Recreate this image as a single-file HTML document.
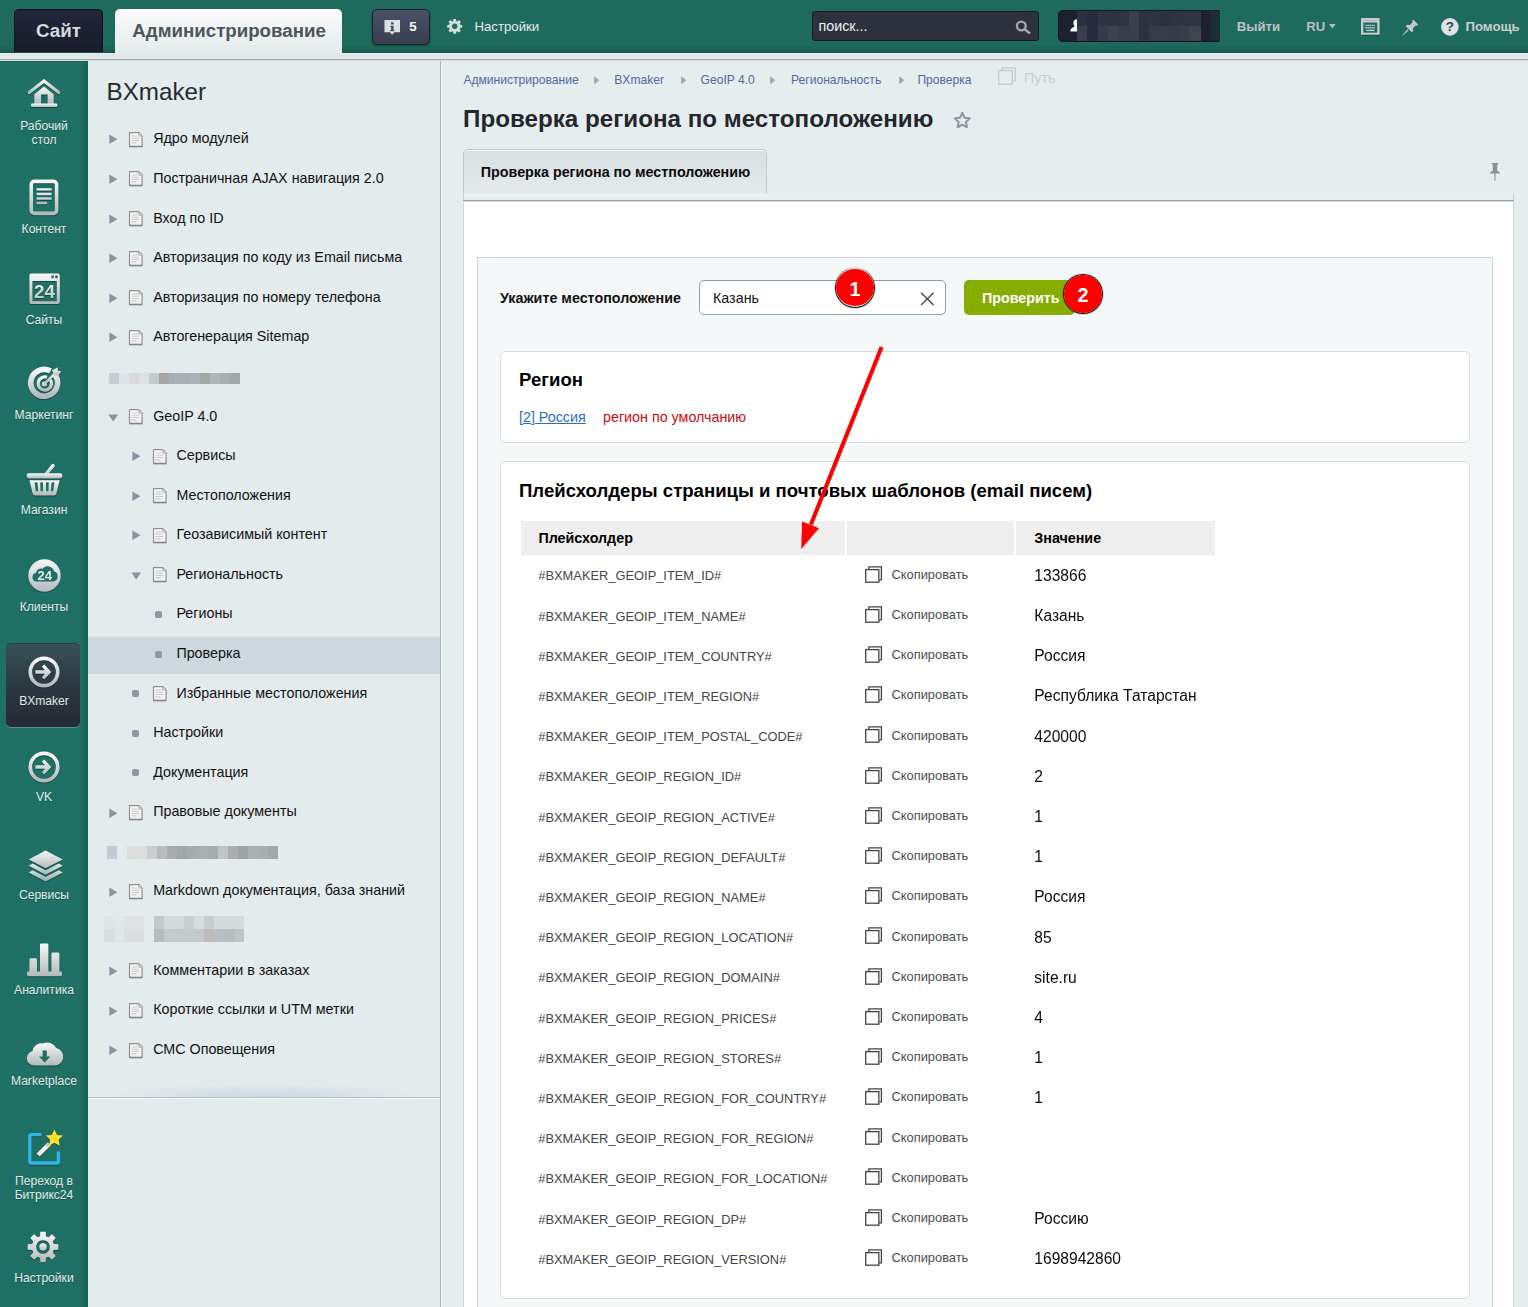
<!DOCTYPE html>
<html lang="ru"><head><meta charset="utf-8"><title>Проверка региона по местоположению</title>
<style>
html,body{margin:0;padding:0;overflow:hidden}
body{width:1528px;height:1307px;overflow:hidden;position:relative;background:#e6edef;font-family:"Liberation Sans",Arial,sans-serif;}
.t{position:absolute;white-space:nowrap;}
i{display:block}
</style></head><body>
<svg width="0" height="0" style="position:absolute"><defs>
<linearGradient id="ig" x1="0" y1="0" x2="0" y2="1" gradientUnits="objectBoundingBox"><stop offset="0" stop-color="#f6f8f8"/><stop offset="1" stop-color="#b3b9b9"/></linearGradient>
<linearGradient id="dg" x1="0" y1="0" x2="0" y2="1"><stop offset="0" stop-color="#ffffff"/><stop offset="1" stop-color="#ececec"/></linearGradient>
</defs></svg>
<div style="position:absolute;left:441px;top:61px;width:1087px;height:1246px;background:#e6edef;"></div>
<div style="position:absolute;left:441px;top:61px;width:1px;height:1246px;background:#f1f5f6;"></div>
<div class="t" style="left:463.4px;top:72px;font-size:12.1px;line-height:16px;color:#4d6aa3;">Администрирование</div>
<div class="t" style="left:614.3px;top:72px;font-size:12.1px;line-height:16px;color:#4d6aa3;">BXmaker</div>
<div class="t" style="left:700.6px;top:72px;font-size:12.1px;line-height:16px;color:#4d6aa3;">GeoIP 4.0</div>
<div class="t" style="left:791px;top:72px;font-size:12.1px;line-height:16px;color:#4d6aa3;">Региональность</div>
<div class="t" style="left:917.4px;top:72px;font-size:12.1px;line-height:16px;color:#4d6aa3;">Проверка</div>
<svg style="position:absolute;left:594.3px;top:76.4px;" width="6" height="9" viewBox="0 0 6 9"><path d="M0.2 0.3L5.2 4.3 0.2 8.4z" fill="#a2a7ad"/></svg>
<svg style="position:absolute;left:681.4px;top:76.4px;" width="6" height="9" viewBox="0 0 6 9"><path d="M0.2 0.3L5.2 4.3 0.2 8.4z" fill="#a2a7ad"/></svg>
<svg style="position:absolute;left:770.4px;top:76.4px;" width="6" height="9" viewBox="0 0 6 9"><path d="M0.2 0.3L5.2 4.3 0.2 8.4z" fill="#a2a7ad"/></svg>
<svg style="position:absolute;left:899.3px;top:76.4px;" width="6" height="9" viewBox="0 0 6 9"><path d="M0.2 0.3L5.2 4.3 0.2 8.4z" fill="#a2a7ad"/></svg>
<svg style="position:absolute;left:998px;top:66.6px;" width="18" height="18" viewBox="0 0 18 18"><g fill="none" stroke="#c3cbd1" stroke-width="1.3"><path d="M4.2 3.2V0.8H17.2V13.8H14.4"/><rect x="0.7" y="3.6" width="13.6" height="13.6"/></g></svg>
<div class="t" style="left:1024px;top:69px;font-size:14.3px;line-height:18px;color:#c7ced6;">Путь</div>
<div class="t" style="left:463px;top:104px;font-size:24.2px;line-height:29px;color:#23262d;font-weight:bold;">Проверка региона по местоположению</div>
<svg style="position:absolute;left:952.6px;top:110.6px;" width="18.6" height="18.6" viewBox="0 0 20 20"><path d="M10 2l2.45 5.2 5.65.7-4.15 3.95 1.05 5.65-5-2.75-5 2.75 1.05-5.65-4.15-3.95 5.65-.7z" fill="none" stroke="#8e98a5" stroke-width="2.2" stroke-linejoin="round"/></svg>
<div style="position:absolute;left:463px;top:149px;width:304px;height:46px;box-sizing:border-box;border:1px solid #c3cbcf;border-bottom:0;border-radius:5px 5px 0 0;background:linear-gradient(#d8dfe1,#e5ebed);box-shadow:inset 0 1px 0 #fbfcfc;"></div>
<div class="t" style="left:480.8px;top:163px;font-size:14.3px;line-height:18px;color:#0c0c0c;font-weight:bold;">Проверка региона по местположению</div>
<svg style="position:absolute;left:1490px;top:163px;" width="10" height="18" viewBox="0 0 10 18"><g fill="#8b9196"><path d="M1.8 0h6.4v1.4h-1v6.4c1.4.5 2.6 1.4 2.8 2.6h-10c.2-1.2 1.4-2.1 2.8-2.6v-6.4h-1z"/><rect x="4.4" y="10" width="1.1" height="7.6"/></g></svg>
<div style="position:absolute;left:463px;top:194px;width:1051px;height:6px;box-sizing:border-box;border-left:1px solid #c6cfd3;border-right:1px solid #c6cfd3;background:linear-gradient(#eef2f3,#e6ecee);"></div>
<div style="position:absolute;left:463px;top:200px;width:1051px;height:1px;background:#9aa2a6;"></div>
<div style="position:absolute;left:463px;top:201px;width:1051px;height:1px;background:#d9dee0;"></div>
<div style="position:absolute;left:463px;top:202px;width:1051px;height:1105px;box-sizing:border-box;background:#fff;border-left:1px solid #cdd5d9;border-right:1px solid #cdd5d9;"></div>
<div style="position:absolute;left:477px;top:257px;width:1016px;height:1050px;box-sizing:border-box;background:#f5f8f9;border:1px solid #cad4db;border-bottom:0;"></div>
<div class="t" style="left:500px;top:289px;font-size:14.3px;line-height:18px;color:#111;font-weight:bold;">Укажите местоположение</div>
<div style="position:absolute;left:699px;top:280px;width:247px;height:35px;box-sizing:border-box;background:#fff;border:1px solid #929aab;border-radius:5px;"></div>
<div class="t" style="left:713px;top:289px;font-size:14.3px;line-height:18px;color:#111;">Казань</div>
<svg style="position:absolute;left:920px;top:291.5px;" width="15" height="14" viewBox="0 0 15 14"><path d="M1 0.8L13.6 13M13.6 0.8L1 13" stroke="#4f4f4f" stroke-width="1.5"/></svg>
<div style="position:absolute;left:964.4px;top:280px;width:110.2px;height:34.7px;background:#86ad00;border-radius:5px;"></div>
<div class="t" style="left:981.9px;top:289px;font-size:14.3px;line-height:18px;color:#fff;font-weight:bold;">Проверить</div>
<div style="position:absolute;left:500px;top:351px;width:970px;height:92px;box-sizing:border-box;background:#fff;border:1px solid #dcdddd;border-radius:5px;"></div>
<div class="t" style="left:519px;top:368px;font-size:18.59px;line-height:23px;color:#000;font-weight:bold;">Регион</div>
<div class="t" style="left:519px;top:408px;font-size:14.3px;line-height:18px;color:#2a6ec4;text-decoration:underline;">[2] Россия</div>
<div class="t" style="left:603px;top:408px;font-size:14.3px;line-height:18px;color:#d20a11;">регион по умолчанию</div>
<div style="position:absolute;left:500px;top:461px;width:970px;height:838px;box-sizing:border-box;background:#fff;border:1px solid #dcdddd;border-radius:5px;"></div>
<div class="t" style="left:519px;top:479px;font-size:18.59px;line-height:23px;color:#000;font-weight:bold;">Плейсхолдеры страницы и почтовых шаблонов (email писем)</div>
<div style="position:absolute;left:521px;top:521px;width:324px;height:33.5px;background:#eeeeee;"></div>
<div style="position:absolute;left:847px;top:521px;width:167px;height:33.5px;background:#eeeeee;"></div>
<div style="position:absolute;left:1016px;top:521px;width:199px;height:33.5px;background:#eeeeee;"></div>
<div class="t" style="left:538.4px;top:529px;font-size:14.3px;line-height:18px;color:#000;font-weight:bold;">Плейсхолдер</div>
<div class="t" style="left:1034.3px;top:529px;font-size:14.3px;line-height:18px;color:#000;font-weight:bold;">Значение</div>
<div class="t" style="left:538.3px;top:567px;font-size:12.87px;line-height:17px;color:#454545;">#BXMAKER_GEOIP_ITEM_ID#</div>
<svg style="position:absolute;left:865px;top:565.8px;" width="18.5" height="18" viewBox="0 0 18.5 18"><g fill="none" stroke="#444" stroke-width="1.3" opacity="1"><path d="M3.85 3.4V0.8H16.4V13.9H14.1"/><rect x="0.7" y="3.6" width="13.15" height="12.6" fill="#fff"/></g></svg>
<div class="t" style="left:891.5px;top:566px;font-size:12.87px;line-height:17px;color:#4d4d4d;">Скопировать</div>
<div class="t" style="left:1034.3px;top:566px;font-size:15.6px;line-height:19px;color:#0c0c0c;transform:scaleY(1.065);transform-origin:0 15px;">133866</div>
<div class="t" style="left:538.3px;top:608px;font-size:12.87px;line-height:17px;color:#454545;">#BXMAKER_GEOIP_ITEM_NAME#</div>
<svg style="position:absolute;left:865px;top:605.8px;" width="18.5" height="18" viewBox="0 0 18.5 18"><g fill="none" stroke="#444" stroke-width="1.3" opacity="1"><path d="M3.85 3.4V0.8H16.4V13.9H14.1"/><rect x="0.7" y="3.6" width="13.15" height="12.6" fill="#fff"/></g></svg>
<div class="t" style="left:891.5px;top:606px;font-size:12.87px;line-height:17px;color:#4d4d4d;">Скопировать</div>
<div class="t" style="left:1034.3px;top:606px;font-size:15.6px;line-height:19px;color:#0c0c0c;transform:scaleY(1.065);transform-origin:0 15px;">Казань</div>
<div class="t" style="left:538.3px;top:648px;font-size:12.87px;line-height:17px;color:#454545;">#BXMAKER_GEOIP_ITEM_COUNTRY#</div>
<svg style="position:absolute;left:865px;top:645.8px;" width="18.5" height="18" viewBox="0 0 18.5 18"><g fill="none" stroke="#444" stroke-width="1.3" opacity="1"><path d="M3.85 3.4V0.8H16.4V13.9H14.1"/><rect x="0.7" y="3.6" width="13.15" height="12.6" fill="#fff"/></g></svg>
<div class="t" style="left:891.5px;top:646px;font-size:12.87px;line-height:17px;color:#4d4d4d;">Скопировать</div>
<div class="t" style="left:1034.3px;top:646px;font-size:15.6px;line-height:19px;color:#0c0c0c;transform:scaleY(1.065);transform-origin:0 15px;">Россия</div>
<div class="t" style="left:538.3px;top:688px;font-size:12.87px;line-height:17px;color:#454545;">#BXMAKER_GEOIP_ITEM_REGION#</div>
<svg style="position:absolute;left:865px;top:685.8px;" width="18.5" height="18" viewBox="0 0 18.5 18"><g fill="none" stroke="#444" stroke-width="1.3" opacity="1"><path d="M3.85 3.4V0.8H16.4V13.9H14.1"/><rect x="0.7" y="3.6" width="13.15" height="12.6" fill="#fff"/></g></svg>
<div class="t" style="left:891.5px;top:686px;font-size:12.87px;line-height:17px;color:#4d4d4d;">Скопировать</div>
<div class="t" style="left:1034.3px;top:686px;font-size:15.6px;line-height:19px;color:#0c0c0c;transform:scaleY(1.065);transform-origin:0 15px;">Республика Татарстан</div>
<div class="t" style="left:538.3px;top:728px;font-size:12.87px;line-height:17px;color:#454545;">#BXMAKER_GEOIP_ITEM_POSTAL_CODE#</div>
<svg style="position:absolute;left:865px;top:725.8px;" width="18.5" height="18" viewBox="0 0 18.5 18"><g fill="none" stroke="#444" stroke-width="1.3" opacity="1"><path d="M3.85 3.4V0.8H16.4V13.9H14.1"/><rect x="0.7" y="3.6" width="13.15" height="12.6" fill="#fff"/></g></svg>
<div class="t" style="left:891.5px;top:727px;font-size:12.87px;line-height:17px;color:#4d4d4d;">Скопировать</div>
<div class="t" style="left:1034.3px;top:727px;font-size:15.6px;line-height:19px;color:#0c0c0c;transform:scaleY(1.065);transform-origin:0 15px;">420000</div>
<div class="t" style="left:538.3px;top:768px;font-size:12.87px;line-height:17px;color:#454545;">#BXMAKER_GEOIP_REGION_ID#</div>
<svg style="position:absolute;left:865px;top:766.8px;" width="18.5" height="18" viewBox="0 0 18.5 18"><g fill="none" stroke="#444" stroke-width="1.3" opacity="1"><path d="M3.85 3.4V0.8H16.4V13.9H14.1"/><rect x="0.7" y="3.6" width="13.15" height="12.6" fill="#fff"/></g></svg>
<div class="t" style="left:891.5px;top:767px;font-size:12.87px;line-height:17px;color:#4d4d4d;">Скопировать</div>
<div class="t" style="left:1034.3px;top:767px;font-size:15.6px;line-height:19px;color:#0c0c0c;transform:scaleY(1.065);transform-origin:0 15px;">2</div>
<div class="t" style="left:538.3px;top:809px;font-size:12.87px;line-height:17px;color:#454545;">#BXMAKER_GEOIP_REGION_ACTIVE#</div>
<svg style="position:absolute;left:865px;top:806.8px;" width="18.5" height="18" viewBox="0 0 18.5 18"><g fill="none" stroke="#444" stroke-width="1.3" opacity="1"><path d="M3.85 3.4V0.8H16.4V13.9H14.1"/><rect x="0.7" y="3.6" width="13.15" height="12.6" fill="#fff"/></g></svg>
<div class="t" style="left:891.5px;top:807px;font-size:12.87px;line-height:17px;color:#4d4d4d;">Скопировать</div>
<div class="t" style="left:1034.3px;top:807px;font-size:15.6px;line-height:19px;color:#0c0c0c;transform:scaleY(1.065);transform-origin:0 15px;">1</div>
<div class="t" style="left:538.3px;top:849px;font-size:12.87px;line-height:17px;color:#454545;">#BXMAKER_GEOIP_REGION_DEFAULT#</div>
<svg style="position:absolute;left:865px;top:846.8px;" width="18.5" height="18" viewBox="0 0 18.5 18"><g fill="none" stroke="#444" stroke-width="1.3" opacity="1"><path d="M3.85 3.4V0.8H16.4V13.9H14.1"/><rect x="0.7" y="3.6" width="13.15" height="12.6" fill="#fff"/></g></svg>
<div class="t" style="left:891.5px;top:847px;font-size:12.87px;line-height:17px;color:#4d4d4d;">Скопировать</div>
<div class="t" style="left:1034.3px;top:847px;font-size:15.6px;line-height:19px;color:#0c0c0c;transform:scaleY(1.065);transform-origin:0 15px;">1</div>
<div class="t" style="left:538.3px;top:889px;font-size:12.87px;line-height:17px;color:#454545;">#BXMAKER_GEOIP_REGION_NAME#</div>
<svg style="position:absolute;left:865px;top:886.8px;" width="18.5" height="18" viewBox="0 0 18.5 18"><g fill="none" stroke="#444" stroke-width="1.3" opacity="1"><path d="M3.85 3.4V0.8H16.4V13.9H14.1"/><rect x="0.7" y="3.6" width="13.15" height="12.6" fill="#fff"/></g></svg>
<div class="t" style="left:891.5px;top:887px;font-size:12.87px;line-height:17px;color:#4d4d4d;">Скопировать</div>
<div class="t" style="left:1034.3px;top:887px;font-size:15.6px;line-height:19px;color:#0c0c0c;transform:scaleY(1.065);transform-origin:0 15px;">Россия</div>
<div class="t" style="left:538.3px;top:929px;font-size:12.87px;line-height:17px;color:#454545;">#BXMAKER_GEOIP_REGION_LOCATION#</div>
<svg style="position:absolute;left:865px;top:926.8px;" width="18.5" height="18" viewBox="0 0 18.5 18"><g fill="none" stroke="#444" stroke-width="1.3" opacity="1"><path d="M3.85 3.4V0.8H16.4V13.9H14.1"/><rect x="0.7" y="3.6" width="13.15" height="12.6" fill="#fff"/></g></svg>
<div class="t" style="left:891.5px;top:928px;font-size:12.87px;line-height:17px;color:#4d4d4d;">Скопировать</div>
<div class="t" style="left:1034.3px;top:928px;font-size:15.6px;line-height:19px;color:#0c0c0c;transform:scaleY(1.065);transform-origin:0 15px;">85</div>
<div class="t" style="left:538.3px;top:969px;font-size:12.87px;line-height:17px;color:#454545;">#BXMAKER_GEOIP_REGION_DOMAIN#</div>
<svg style="position:absolute;left:865px;top:967.8px;" width="18.5" height="18" viewBox="0 0 18.5 18"><g fill="none" stroke="#444" stroke-width="1.3" opacity="1"><path d="M3.85 3.4V0.8H16.4V13.9H14.1"/><rect x="0.7" y="3.6" width="13.15" height="12.6" fill="#fff"/></g></svg>
<div class="t" style="left:891.5px;top:968px;font-size:12.87px;line-height:17px;color:#4d4d4d;">Скопировать</div>
<div class="t" style="left:1034.3px;top:968px;font-size:15.6px;line-height:19px;color:#0c0c0c;transform:scaleY(1.065);transform-origin:0 15px;">site.ru</div>
<div class="t" style="left:538.3px;top:1010px;font-size:12.87px;line-height:17px;color:#454545;">#BXMAKER_GEOIP_REGION_PRICES#</div>
<svg style="position:absolute;left:865px;top:1007.8px;" width="18.5" height="18" viewBox="0 0 18.5 18"><g fill="none" stroke="#444" stroke-width="1.3" opacity="1"><path d="M3.85 3.4V0.8H16.4V13.9H14.1"/><rect x="0.7" y="3.6" width="13.15" height="12.6" fill="#fff"/></g></svg>
<div class="t" style="left:891.5px;top:1008px;font-size:12.87px;line-height:17px;color:#4d4d4d;">Скопировать</div>
<div class="t" style="left:1034.3px;top:1008px;font-size:15.6px;line-height:19px;color:#0c0c0c;transform:scaleY(1.065);transform-origin:0 15px;">4</div>
<div class="t" style="left:538.3px;top:1050px;font-size:12.87px;line-height:17px;color:#454545;">#BXMAKER_GEOIP_REGION_STORES#</div>
<svg style="position:absolute;left:865px;top:1047.8px;" width="18.5" height="18" viewBox="0 0 18.5 18"><g fill="none" stroke="#444" stroke-width="1.3" opacity="1"><path d="M3.85 3.4V0.8H16.4V13.9H14.1"/><rect x="0.7" y="3.6" width="13.15" height="12.6" fill="#fff"/></g></svg>
<div class="t" style="left:891.5px;top:1048px;font-size:12.87px;line-height:17px;color:#4d4d4d;">Скопировать</div>
<div class="t" style="left:1034.3px;top:1048px;font-size:15.6px;line-height:19px;color:#0c0c0c;transform:scaleY(1.065);transform-origin:0 15px;">1</div>
<div class="t" style="left:538.3px;top:1090px;font-size:12.87px;line-height:17px;color:#454545;">#BXMAKER_GEOIP_REGION_FOR_COUNTRY#</div>
<svg style="position:absolute;left:865px;top:1087.8px;" width="18.5" height="18" viewBox="0 0 18.5 18"><g fill="none" stroke="#444" stroke-width="1.3" opacity="1"><path d="M3.85 3.4V0.8H16.4V13.9H14.1"/><rect x="0.7" y="3.6" width="13.15" height="12.6" fill="#fff"/></g></svg>
<div class="t" style="left:891.5px;top:1088px;font-size:12.87px;line-height:17px;color:#4d4d4d;">Скопировать</div>
<div class="t" style="left:1034.3px;top:1088px;font-size:15.6px;line-height:19px;color:#0c0c0c;transform:scaleY(1.065);transform-origin:0 15px;">1</div>
<div class="t" style="left:538.3px;top:1130px;font-size:12.87px;line-height:17px;color:#454545;">#BXMAKER_GEOIP_REGION_FOR_REGION#</div>
<svg style="position:absolute;left:865px;top:1127.8px;" width="18.5" height="18" viewBox="0 0 18.5 18"><g fill="none" stroke="#444" stroke-width="1.3" opacity="1"><path d="M3.85 3.4V0.8H16.4V13.9H14.1"/><rect x="0.7" y="3.6" width="13.15" height="12.6" fill="#fff"/></g></svg>
<div class="t" style="left:891.5px;top:1129px;font-size:12.87px;line-height:17px;color:#4d4d4d;">Скопировать</div>
<div class="t" style="left:538.3px;top:1170px;font-size:12.87px;line-height:17px;color:#454545;">#BXMAKER_GEOIP_REGION_FOR_LOCATION#</div>
<svg style="position:absolute;left:865px;top:1167.8px;" width="18.5" height="18" viewBox="0 0 18.5 18"><g fill="none" stroke="#444" stroke-width="1.3" opacity="1"><path d="M3.85 3.4V0.8H16.4V13.9H14.1"/><rect x="0.7" y="3.6" width="13.15" height="12.6" fill="#fff"/></g></svg>
<div class="t" style="left:891.5px;top:1169px;font-size:12.87px;line-height:17px;color:#4d4d4d;">Скопировать</div>
<div class="t" style="left:538.3px;top:1211px;font-size:12.87px;line-height:17px;color:#454545;">#BXMAKER_GEOIP_REGION_DP#</div>
<svg style="position:absolute;left:865px;top:1208.8px;" width="18.5" height="18" viewBox="0 0 18.5 18"><g fill="none" stroke="#444" stroke-width="1.3" opacity="1"><path d="M3.85 3.4V0.8H16.4V13.9H14.1"/><rect x="0.7" y="3.6" width="13.15" height="12.6" fill="#fff"/></g></svg>
<div class="t" style="left:891.5px;top:1209px;font-size:12.87px;line-height:17px;color:#4d4d4d;">Скопировать</div>
<div class="t" style="left:1034.3px;top:1209px;font-size:15.6px;line-height:19px;color:#0c0c0c;transform:scaleY(1.065);transform-origin:0 15px;">Россию</div>
<div class="t" style="left:538.3px;top:1251px;font-size:12.87px;line-height:17px;color:#454545;">#BXMAKER_GEOIP_REGION_VERSION#</div>
<svg style="position:absolute;left:865px;top:1248.8px;" width="18.5" height="18" viewBox="0 0 18.5 18"><g fill="none" stroke="#444" stroke-width="1.3" opacity="1"><path d="M3.85 3.4V0.8H16.4V13.9H14.1"/><rect x="0.7" y="3.6" width="13.15" height="12.6" fill="#fff"/></g></svg>
<div class="t" style="left:891.5px;top:1249px;font-size:12.87px;line-height:17px;color:#4d4d4d;">Скопировать</div>
<div class="t" style="left:1034.3px;top:1249px;font-size:15.6px;line-height:19px;color:#0c0c0c;transform:scaleY(1.065);transform-origin:0 15px;">1698942860</div>
<svg style="position:absolute;left:780px;top:330px;" width="120" height="230" viewBox="0 0 120 230"><path d="M101.6 17.1L30.9 194.6" stroke="#ff0000" stroke-width="4.1"/><path d="M21.2 218.9L22.1 191.6 39 198.3z" fill="#ff0000"/></svg>
<div style="position:absolute;left:834.15px;top:266.90000000000003px;width:41.8px;height:41.8px;border-radius:50%;background:rgba(0,0,0,.13);"></div><div style="position:absolute;left:834.75px;top:267.5px;width:40.6px;height:40.6px;border-radius:50%;background:#161616;"></div><div style="position:absolute;left:835.65px;top:268.40000000000003px;width:38.8px;height:38.8px;border-radius:50%;background:#fff;"></div><div style="position:absolute;left:836.4499999999999px;top:269.2px;width:37.2px;height:37.2px;border-radius:50%;background:#ff0000;"></div><div class="t" style="left:835.05px;top:277px;font-size:19.8px;line-height:24px;color:#fff;font-weight:bold;width:40px;text-align:center;">1</div>
<div style="position:absolute;left:1062.05px;top:273.05px;width:41.8px;height:41.8px;border-radius:50%;background:rgba(0,0,0,.13);"></div><div style="position:absolute;left:1062.65px;top:273.65px;width:40.6px;height:40.6px;border-radius:50%;background:#161616;"></div><div style="position:absolute;left:1063.55px;top:274.55px;width:38.8px;height:38.8px;border-radius:50%;background:#fff;"></div><div style="position:absolute;left:1064.3500000000001px;top:275.34999999999997px;width:37.2px;height:37.2px;border-radius:50%;background:#ff0000;"></div><div class="t" style="left:1062.95px;top:283px;font-size:19.8px;line-height:24px;color:#fff;font-weight:bold;width:40px;text-align:center;">2</div>
<div style="position:absolute;left:88px;top:61px;width:352px;height:1246px;background:#e4ebed;"></div>
<div style="position:absolute;left:440px;top:61px;width:1px;height:1246px;background:#a6b4c8;"></div>
<div style="position:absolute;left:88px;top:637.2px;width:352px;height:36.5px;background:#cdd8de;"></div>
<div style="position:absolute;left:88px;top:1083px;width:352px;height:15px;background:radial-gradient(ellipse 45% 100% at 50% 100%,rgba(150,175,200,.35),rgba(150,175,200,0) 100%);"></div>
<div style="position:absolute;left:88px;top:1097px;width:352px;height:1px;background:#b3c3d0;"></div>
<div style="position:absolute;left:88px;top:1098px;width:352px;height:1px;background:#f4f7f8;"></div>
<div class="t" style="left:106.6px;top:77px;font-size:24.2px;line-height:29px;color:#222b33;">BXmaker</div>
<svg style="position:absolute;left:108.8px;top:134px;" width="9" height="11" viewBox="0 0 9 11"><path d="M0.4 0.4L8.4 5.2 0.4 10z" fill="#8893a5"/></svg>
<svg style="position:absolute;left:128.1px;top:132px;" width="15.6" height="16" viewBox="0 0 15 16"><path d="M1.2 0.7h9.3l3.3 3.3v10.3h-12.6z" fill="url(#dg)" stroke="#8f8f8f" stroke-width="1.2" stroke-linejoin="round"/><path d="M10.3 0.9v3.3h3.3z" fill="#e4e4e4" stroke="#a5a5a5" stroke-width=".7"/><path d="M3.4 4h5.6M3.4 6.2h7.4M3.4 8.4h7.4M3.4 10.8h4.6" stroke="#c4c4c4" stroke-width="1"/><path d="M0.9 14.8h13.2" stroke="#7e7e7e" stroke-width="1"/></svg>
<div class="t" style="left:153.2px;top:129px;font-size:14.3px;line-height:18px;color:#111;">Ядро модулей</div>
<svg style="position:absolute;left:108.8px;top:174px;" width="9" height="11" viewBox="0 0 9 11"><path d="M0.4 0.4L8.4 5.2 0.4 10z" fill="#8893a5"/></svg>
<svg style="position:absolute;left:128.1px;top:171px;" width="15.6" height="16" viewBox="0 0 15 16"><path d="M1.2 0.7h9.3l3.3 3.3v10.3h-12.6z" fill="url(#dg)" stroke="#8f8f8f" stroke-width="1.2" stroke-linejoin="round"/><path d="M10.3 0.9v3.3h3.3z" fill="#e4e4e4" stroke="#a5a5a5" stroke-width=".7"/><path d="M3.4 4h5.6M3.4 6.2h7.4M3.4 8.4h7.4M3.4 10.8h4.6" stroke="#c4c4c4" stroke-width="1"/><path d="M0.9 14.8h13.2" stroke="#7e7e7e" stroke-width="1"/></svg>
<div class="t" style="left:153.2px;top:169px;font-size:14.3px;line-height:18px;color:#111;">Постраничная AJAX навигация 2.0</div>
<svg style="position:absolute;left:108.8px;top:214px;" width="9" height="11" viewBox="0 0 9 11"><path d="M0.4 0.4L8.4 5.2 0.4 10z" fill="#8893a5"/></svg>
<svg style="position:absolute;left:128.1px;top:211px;" width="15.6" height="16" viewBox="0 0 15 16"><path d="M1.2 0.7h9.3l3.3 3.3v10.3h-12.6z" fill="url(#dg)" stroke="#8f8f8f" stroke-width="1.2" stroke-linejoin="round"/><path d="M10.3 0.9v3.3h3.3z" fill="#e4e4e4" stroke="#a5a5a5" stroke-width=".7"/><path d="M3.4 4h5.6M3.4 6.2h7.4M3.4 8.4h7.4M3.4 10.8h4.6" stroke="#c4c4c4" stroke-width="1"/><path d="M0.9 14.8h13.2" stroke="#7e7e7e" stroke-width="1"/></svg>
<div class="t" style="left:153.2px;top:209px;font-size:14.3px;line-height:18px;color:#111;">Вход по ID</div>
<svg style="position:absolute;left:108.8px;top:253px;" width="9" height="11" viewBox="0 0 9 11"><path d="M0.4 0.4L8.4 5.2 0.4 10z" fill="#8893a5"/></svg>
<svg style="position:absolute;left:128.1px;top:251px;" width="15.6" height="16" viewBox="0 0 15 16"><path d="M1.2 0.7h9.3l3.3 3.3v10.3h-12.6z" fill="url(#dg)" stroke="#8f8f8f" stroke-width="1.2" stroke-linejoin="round"/><path d="M10.3 0.9v3.3h3.3z" fill="#e4e4e4" stroke="#a5a5a5" stroke-width=".7"/><path d="M3.4 4h5.6M3.4 6.2h7.4M3.4 8.4h7.4M3.4 10.8h4.6" stroke="#c4c4c4" stroke-width="1"/><path d="M0.9 14.8h13.2" stroke="#7e7e7e" stroke-width="1"/></svg>
<div class="t" style="left:153.2px;top:248px;font-size:14.3px;line-height:18px;color:#111;">Авторизация по коду из Email письма</div>
<svg style="position:absolute;left:108.8px;top:293px;" width="9" height="11" viewBox="0 0 9 11"><path d="M0.4 0.4L8.4 5.2 0.4 10z" fill="#8893a5"/></svg>
<svg style="position:absolute;left:128.1px;top:290px;" width="15.6" height="16" viewBox="0 0 15 16"><path d="M1.2 0.7h9.3l3.3 3.3v10.3h-12.6z" fill="url(#dg)" stroke="#8f8f8f" stroke-width="1.2" stroke-linejoin="round"/><path d="M10.3 0.9v3.3h3.3z" fill="#e4e4e4" stroke="#a5a5a5" stroke-width=".7"/><path d="M3.4 4h5.6M3.4 6.2h7.4M3.4 8.4h7.4M3.4 10.8h4.6" stroke="#c4c4c4" stroke-width="1"/><path d="M0.9 14.8h13.2" stroke="#7e7e7e" stroke-width="1"/></svg>
<div class="t" style="left:153.2px;top:288px;font-size:14.3px;line-height:18px;color:#111;">Авторизация по номеру телефона</div>
<svg style="position:absolute;left:108.8px;top:332px;" width="9" height="11" viewBox="0 0 9 11"><path d="M0.4 0.4L8.4 5.2 0.4 10z" fill="#8893a5"/></svg>
<svg style="position:absolute;left:128.1px;top:330px;" width="15.6" height="16" viewBox="0 0 15 16"><path d="M1.2 0.7h9.3l3.3 3.3v10.3h-12.6z" fill="url(#dg)" stroke="#8f8f8f" stroke-width="1.2" stroke-linejoin="round"/><path d="M10.3 0.9v3.3h3.3z" fill="#e4e4e4" stroke="#a5a5a5" stroke-width=".7"/><path d="M3.4 4h5.6M3.4 6.2h7.4M3.4 8.4h7.4M3.4 10.8h4.6" stroke="#c4c4c4" stroke-width="1"/><path d="M0.9 14.8h13.2" stroke="#7e7e7e" stroke-width="1"/></svg>
<div class="t" style="left:153.2px;top:327px;font-size:14.3px;line-height:18px;color:#111;">Автогенерация Sitemap</div>
<svg style="position:absolute;left:108.0px;top:414px;" width="11" height="8" viewBox="0 0 11 8"><path d="M0.3 0.4h9.8L5.2 7.4z" fill="#8793a5"/></svg>
<svg style="position:absolute;left:128.1px;top:409px;" width="15.6" height="16" viewBox="0 0 15 16"><path d="M1.2 0.7h9.3l3.3 3.3v10.3h-12.6z" fill="url(#dg)" stroke="#8f8f8f" stroke-width="1.2" stroke-linejoin="round"/><path d="M10.3 0.9v3.3h3.3z" fill="#e4e4e4" stroke="#a5a5a5" stroke-width=".7"/><path d="M3.4 4h5.6M3.4 6.2h7.4M3.4 8.4h7.4M3.4 10.8h4.6" stroke="#c4c4c4" stroke-width="1"/><path d="M0.9 14.8h13.2" stroke="#7e7e7e" stroke-width="1"/></svg>
<div class="t" style="left:153.2px;top:407px;font-size:14.3px;line-height:18px;color:#111;">GeoIP 4.0</div>
<svg style="position:absolute;left:131.8px;top:451px;" width="9" height="11" viewBox="0 0 9 11"><path d="M0.4 0.4L8.4 5.2 0.4 10z" fill="#8893a5"/></svg>
<svg style="position:absolute;left:152.0px;top:449px;" width="15.6" height="16" viewBox="0 0 15 16"><path d="M1.2 0.7h9.3l3.3 3.3v10.3h-12.6z" fill="url(#dg)" stroke="#8f8f8f" stroke-width="1.2" stroke-linejoin="round"/><path d="M10.3 0.9v3.3h3.3z" fill="#e4e4e4" stroke="#a5a5a5" stroke-width=".7"/><path d="M3.4 4h5.6M3.4 6.2h7.4M3.4 8.4h7.4M3.4 10.8h4.6" stroke="#c4c4c4" stroke-width="1"/><path d="M0.9 14.8h13.2" stroke="#7e7e7e" stroke-width="1"/></svg>
<div class="t" style="left:176.39999999999998px;top:446px;font-size:14.3px;line-height:18px;color:#111;">Сервисы</div>
<svg style="position:absolute;left:131.8px;top:491px;" width="9" height="11" viewBox="0 0 9 11"><path d="M0.4 0.4L8.4 5.2 0.4 10z" fill="#8893a5"/></svg>
<svg style="position:absolute;left:152.0px;top:488px;" width="15.6" height="16" viewBox="0 0 15 16"><path d="M1.2 0.7h9.3l3.3 3.3v10.3h-12.6z" fill="url(#dg)" stroke="#8f8f8f" stroke-width="1.2" stroke-linejoin="round"/><path d="M10.3 0.9v3.3h3.3z" fill="#e4e4e4" stroke="#a5a5a5" stroke-width=".7"/><path d="M3.4 4h5.6M3.4 6.2h7.4M3.4 8.4h7.4M3.4 10.8h4.6" stroke="#c4c4c4" stroke-width="1"/><path d="M0.9 14.8h13.2" stroke="#7e7e7e" stroke-width="1"/></svg>
<div class="t" style="left:176.39999999999998px;top:486px;font-size:14.3px;line-height:18px;color:#111;">Местоположения</div>
<svg style="position:absolute;left:131.8px;top:530px;" width="9" height="11" viewBox="0 0 9 11"><path d="M0.4 0.4L8.4 5.2 0.4 10z" fill="#8893a5"/></svg>
<svg style="position:absolute;left:152.0px;top:528px;" width="15.6" height="16" viewBox="0 0 15 16"><path d="M1.2 0.7h9.3l3.3 3.3v10.3h-12.6z" fill="url(#dg)" stroke="#8f8f8f" stroke-width="1.2" stroke-linejoin="round"/><path d="M10.3 0.9v3.3h3.3z" fill="#e4e4e4" stroke="#a5a5a5" stroke-width=".7"/><path d="M3.4 4h5.6M3.4 6.2h7.4M3.4 8.4h7.4M3.4 10.8h4.6" stroke="#c4c4c4" stroke-width="1"/><path d="M0.9 14.8h13.2" stroke="#7e7e7e" stroke-width="1"/></svg>
<div class="t" style="left:176.39999999999998px;top:525px;font-size:14.3px;line-height:18px;color:#111;">Геозависимый контент</div>
<svg style="position:absolute;left:131.0px;top:572px;" width="11" height="8" viewBox="0 0 11 8"><path d="M0.3 0.4h9.8L5.2 7.4z" fill="#8793a5"/></svg>
<svg style="position:absolute;left:152.0px;top:567px;" width="15.6" height="16" viewBox="0 0 15 16"><path d="M1.2 0.7h9.3l3.3 3.3v10.3h-12.6z" fill="url(#dg)" stroke="#8f8f8f" stroke-width="1.2" stroke-linejoin="round"/><path d="M10.3 0.9v3.3h3.3z" fill="#e4e4e4" stroke="#a5a5a5" stroke-width=".7"/><path d="M3.4 4h5.6M3.4 6.2h7.4M3.4 8.4h7.4M3.4 10.8h4.6" stroke="#c4c4c4" stroke-width="1"/><path d="M0.9 14.8h13.2" stroke="#7e7e7e" stroke-width="1"/></svg>
<div class="t" style="left:176.39999999999998px;top:565px;font-size:14.3px;line-height:18px;color:#111;">Региональность</div>
<div style="position:absolute;left:154.8px;top:611px;width:6.8px;height:6.8px;border-radius:2px;background:#8e99a8;"></div>
<div class="t" style="left:176.39999999999998px;top:604px;font-size:14.3px;line-height:18px;color:#111;">Регионы</div>
<div style="position:absolute;left:154.8px;top:651px;width:6.8px;height:6.8px;border-radius:2px;background:#8e99a8;"></div>
<div class="t" style="left:176.39999999999998px;top:644px;font-size:14.3px;line-height:18px;color:#111;">Проверка</div>
<div style="position:absolute;left:131.8px;top:690px;width:6.8px;height:6.8px;border-radius:2px;background:#8e99a8;"></div>
<svg style="position:absolute;left:152.0px;top:686px;" width="15.6" height="16" viewBox="0 0 15 16"><path d="M1.2 0.7h9.3l3.3 3.3v10.3h-12.6z" fill="url(#dg)" stroke="#8f8f8f" stroke-width="1.2" stroke-linejoin="round"/><path d="M10.3 0.9v3.3h3.3z" fill="#e4e4e4" stroke="#a5a5a5" stroke-width=".7"/><path d="M3.4 4h5.6M3.4 6.2h7.4M3.4 8.4h7.4M3.4 10.8h4.6" stroke="#c4c4c4" stroke-width="1"/><path d="M0.9 14.8h13.2" stroke="#7e7e7e" stroke-width="1"/></svg>
<div class="t" style="left:176.39999999999998px;top:684px;font-size:14.3px;line-height:18px;color:#111;">Избранные местоположения</div>
<div style="position:absolute;left:131.8px;top:730px;width:6.8px;height:6.8px;border-radius:2px;background:#8e99a8;"></div>
<div class="t" style="left:153.2px;top:723px;font-size:14.3px;line-height:18px;color:#111;">Настройки</div>
<div style="position:absolute;left:131.8px;top:769px;width:6.8px;height:6.8px;border-radius:2px;background:#8e99a8;"></div>
<div class="t" style="left:153.2px;top:763px;font-size:14.3px;line-height:18px;color:#111;">Документация</div>
<svg style="position:absolute;left:108.8px;top:808px;" width="9" height="11" viewBox="0 0 9 11"><path d="M0.4 0.4L8.4 5.2 0.4 10z" fill="#8893a5"/></svg>
<svg style="position:absolute;left:128.1px;top:805px;" width="15.6" height="16" viewBox="0 0 15 16"><path d="M1.2 0.7h9.3l3.3 3.3v10.3h-12.6z" fill="url(#dg)" stroke="#8f8f8f" stroke-width="1.2" stroke-linejoin="round"/><path d="M10.3 0.9v3.3h3.3z" fill="#e4e4e4" stroke="#a5a5a5" stroke-width=".7"/><path d="M3.4 4h5.6M3.4 6.2h7.4M3.4 8.4h7.4M3.4 10.8h4.6" stroke="#c4c4c4" stroke-width="1"/><path d="M0.9 14.8h13.2" stroke="#7e7e7e" stroke-width="1"/></svg>
<div class="t" style="left:153.2px;top:802px;font-size:14.3px;line-height:18px;color:#111;">Правовые документы</div>
<svg style="position:absolute;left:108.8px;top:887px;" width="9" height="11" viewBox="0 0 9 11"><path d="M0.4 0.4L8.4 5.2 0.4 10z" fill="#8893a5"/></svg>
<svg style="position:absolute;left:128.1px;top:884px;" width="15.6" height="16" viewBox="0 0 15 16"><path d="M1.2 0.7h9.3l3.3 3.3v10.3h-12.6z" fill="url(#dg)" stroke="#8f8f8f" stroke-width="1.2" stroke-linejoin="round"/><path d="M10.3 0.9v3.3h3.3z" fill="#e4e4e4" stroke="#a5a5a5" stroke-width=".7"/><path d="M3.4 4h5.6M3.4 6.2h7.4M3.4 8.4h7.4M3.4 10.8h4.6" stroke="#c4c4c4" stroke-width="1"/><path d="M0.9 14.8h13.2" stroke="#7e7e7e" stroke-width="1"/></svg>
<div class="t" style="left:153.2px;top:881px;font-size:14.3px;line-height:18px;color:#111;">Markdown документация, база знаний</div>
<svg style="position:absolute;left:108.8px;top:966px;" width="9" height="11" viewBox="0 0 9 11"><path d="M0.4 0.4L8.4 5.2 0.4 10z" fill="#8893a5"/></svg>
<svg style="position:absolute;left:128.1px;top:963px;" width="15.6" height="16" viewBox="0 0 15 16"><path d="M1.2 0.7h9.3l3.3 3.3v10.3h-12.6z" fill="url(#dg)" stroke="#8f8f8f" stroke-width="1.2" stroke-linejoin="round"/><path d="M10.3 0.9v3.3h3.3z" fill="#e4e4e4" stroke="#a5a5a5" stroke-width=".7"/><path d="M3.4 4h5.6M3.4 6.2h7.4M3.4 8.4h7.4M3.4 10.8h4.6" stroke="#c4c4c4" stroke-width="1"/><path d="M0.9 14.8h13.2" stroke="#7e7e7e" stroke-width="1"/></svg>
<div class="t" style="left:153.2px;top:961px;font-size:14.3px;line-height:18px;color:#111;">Комментарии в заказах</div>
<svg style="position:absolute;left:108.8px;top:1006px;" width="9" height="11" viewBox="0 0 9 11"><path d="M0.4 0.4L8.4 5.2 0.4 10z" fill="#8893a5"/></svg>
<svg style="position:absolute;left:128.1px;top:1003px;" width="15.6" height="16" viewBox="0 0 15 16"><path d="M1.2 0.7h9.3l3.3 3.3v10.3h-12.6z" fill="url(#dg)" stroke="#8f8f8f" stroke-width="1.2" stroke-linejoin="round"/><path d="M10.3 0.9v3.3h3.3z" fill="#e4e4e4" stroke="#a5a5a5" stroke-width=".7"/><path d="M3.4 4h5.6M3.4 6.2h7.4M3.4 8.4h7.4M3.4 10.8h4.6" stroke="#c4c4c4" stroke-width="1"/><path d="M0.9 14.8h13.2" stroke="#7e7e7e" stroke-width="1"/></svg>
<div class="t" style="left:153.2px;top:1000px;font-size:14.3px;line-height:18px;color:#111;">Короткие ссылки и UTM метки</div>
<svg style="position:absolute;left:108.8px;top:1045px;" width="9" height="11" viewBox="0 0 9 11"><path d="M0.4 0.4L8.4 5.2 0.4 10z" fill="#8893a5"/></svg>
<svg style="position:absolute;left:128.1px;top:1043px;" width="15.6" height="16" viewBox="0 0 15 16"><path d="M1.2 0.7h9.3l3.3 3.3v10.3h-12.6z" fill="url(#dg)" stroke="#8f8f8f" stroke-width="1.2" stroke-linejoin="round"/><path d="M10.3 0.9v3.3h3.3z" fill="#e4e4e4" stroke="#a5a5a5" stroke-width=".7"/><path d="M3.4 4h5.6M3.4 6.2h7.4M3.4 8.4h7.4M3.4 10.8h4.6" stroke="#c4c4c4" stroke-width="1"/><path d="M0.9 14.8h13.2" stroke="#7e7e7e" stroke-width="1"/></svg>
<div class="t" style="left:153.2px;top:1040px;font-size:14.3px;line-height:18px;color:#111;">СМС Оповещения</div>
<div style="position:absolute;left:109px;top:373px;width:131px;height:11px;"><i style="position:absolute;left:0.00px;top:0;width:10.38px;height:11px;background:#c5ccd6"></i><i style="position:absolute;left:10.08px;top:0;width:10.38px;height:11px;background:#dde3e6"></i><i style="position:absolute;left:20.15px;top:0;width:10.38px;height:11px;background:#d9d9da"></i><i style="position:absolute;left:30.23px;top:0;width:10.38px;height:11px;background:#dce1e3"></i><i style="position:absolute;left:40.31px;top:0;width:10.38px;height:11px;background:#c4cbcc"></i><i style="position:absolute;left:50.38px;top:0;width:10.38px;height:11px;background:#a5a5a5"></i><i style="position:absolute;left:60.46px;top:0;width:10.38px;height:11px;background:#a9b0b5"></i><i style="position:absolute;left:70.54px;top:0;width:10.38px;height:11px;background:#a9b0b4"></i><i style="position:absolute;left:80.62px;top:0;width:10.38px;height:11px;background:#abb3ba"></i><i style="position:absolute;left:90.69px;top:0;width:10.38px;height:11px;background:#a5a6a6"></i><i style="position:absolute;left:100.77px;top:0;width:10.38px;height:11px;background:#b0b6b6"></i><i style="position:absolute;left:110.85px;top:0;width:10.38px;height:11px;background:#a9b0b3"></i><i style="position:absolute;left:120.92px;top:0;width:10.38px;height:11px;background:#a6a9ab"></i></div>
<div style="position:absolute;left:107px;top:846px;width:10px;height:13px;"><i style="position:absolute;left:0.00px;top:0;width:10.30px;height:13px;background:#c5cbd6"></i></div>
<div style="position:absolute;left:127px;top:846px;width:151px;height:13px;"><i style="position:absolute;left:0.00px;top:0;width:10.37px;height:13px;background:#dcdcdc"></i><i style="position:absolute;left:10.07px;top:0;width:10.37px;height:13px;background:#dddddd"></i><i style="position:absolute;left:20.13px;top:0;width:10.37px;height:13px;background:#c9cece"></i><i style="position:absolute;left:30.20px;top:0;width:10.37px;height:13px;background:#b8bcbf"></i><i style="position:absolute;left:40.27px;top:0;width:10.37px;height:13px;background:#a9adaf"></i><i style="position:absolute;left:50.33px;top:0;width:10.37px;height:13px;background:#a3a6a6"></i><i style="position:absolute;left:60.40px;top:0;width:10.37px;height:13px;background:#a6adb0"></i><i style="position:absolute;left:70.47px;top:0;width:10.37px;height:13px;background:#abafaf"></i><i style="position:absolute;left:80.53px;top:0;width:10.37px;height:13px;background:#a6adb0"></i><i style="position:absolute;left:90.60px;top:0;width:10.37px;height:13px;background:#c0c4c4"></i><i style="position:absolute;left:100.67px;top:0;width:10.37px;height:13px;background:#a9adad"></i><i style="position:absolute;left:110.73px;top:0;width:10.37px;height:13px;background:#9da3a6"></i><i style="position:absolute;left:120.80px;top:0;width:10.37px;height:13px;background:#abb0b0"></i><i style="position:absolute;left:130.87px;top:0;width:10.37px;height:13px;background:#a9afb0"></i><i style="position:absolute;left:140.93px;top:0;width:10.37px;height:13px;background:#a3a8aa"></i></div>
<div style="position:absolute;left:104px;top:916px;width:40px;height:13px;"><i style="position:absolute;left:0.00px;top:0;width:10.30px;height:13px;background:#e0e5e7"></i><i style="position:absolute;left:10.00px;top:0;width:10.30px;height:13px;background:#e2e7e9"></i><i style="position:absolute;left:20.00px;top:0;width:10.30px;height:13px;background:#dfe3e5"></i><i style="position:absolute;left:30.00px;top:0;width:10.30px;height:13px;background:#dfe3e5"></i></div>
<div style="position:absolute;left:104px;top:929px;width:40px;height:13px;"><i style="position:absolute;left:0.00px;top:0;width:10.30px;height:13px;background:#d9dee1"></i><i style="position:absolute;left:10.00px;top:0;width:10.30px;height:13px;background:#e0e5e7"></i><i style="position:absolute;left:20.00px;top:0;width:10.30px;height:13px;background:#dcdfe1"></i><i style="position:absolute;left:30.00px;top:0;width:10.30px;height:13px;background:#dcdfe1"></i></div>
<div style="position:absolute;left:154px;top:916px;width:90px;height:13px;"><i style="position:absolute;left:0.00px;top:0;width:10.30px;height:13px;background:#c4cad0"></i><i style="position:absolute;left:10.00px;top:0;width:10.30px;height:13px;background:#d5dadd"></i><i style="position:absolute;left:20.00px;top:0;width:10.30px;height:13px;background:#d5dadd"></i><i style="position:absolute;left:30.00px;top:0;width:10.30px;height:13px;background:#c9ced2"></i><i style="position:absolute;left:40.00px;top:0;width:10.30px;height:13px;background:#d6dcdf"></i><i style="position:absolute;left:50.00px;top:0;width:10.30px;height:13px;background:#c9cdd1"></i><i style="position:absolute;left:60.00px;top:0;width:10.30px;height:13px;background:#d5dadd"></i><i style="position:absolute;left:70.00px;top:0;width:10.30px;height:13px;background:#d5dadd"></i><i style="position:absolute;left:80.00px;top:0;width:10.30px;height:13px;background:#d6dbde"></i></div>
<div style="position:absolute;left:154px;top:929px;width:90px;height:13px;"><i style="position:absolute;left:0.00px;top:0;width:10.30px;height:13px;background:#b6bcc1"></i><i style="position:absolute;left:10.00px;top:0;width:10.30px;height:13px;background:#c5cacc"></i><i style="position:absolute;left:20.00px;top:0;width:10.30px;height:13px;background:#c4cacc"></i><i style="position:absolute;left:30.00px;top:0;width:10.30px;height:13px;background:#c5caca"></i><i style="position:absolute;left:40.00px;top:0;width:10.30px;height:13px;background:#c4cacc"></i><i style="position:absolute;left:50.00px;top:0;width:10.30px;height:13px;background:#bfbcbc"></i><i style="position:absolute;left:60.00px;top:0;width:10.30px;height:13px;background:#b9bfc2"></i><i style="position:absolute;left:70.00px;top:0;width:10.30px;height:13px;background:#b8bebf"></i><i style="position:absolute;left:80.00px;top:0;width:10.30px;height:13px;background:#c0c4c7"></i></div>
<div style="position:absolute;left:0px;top:61px;width:88px;height:1246px;background-color:#1e7164;background-image:radial-gradient(rgba(0,0,0,.06) .7px,transparent 1px),linear-gradient(to right,rgba(0,0,0,0) 80px,rgba(0,0,0,.16) 88px);background-size:3px 3px,100% 100%;"></div>
<div style="position:absolute;left:6px;top:643px;width:74px;height:84px;border-radius:5px;background:linear-gradient(#3a5258,#2d3a43 45%,#252a35);box-shadow:0 1px 0 rgba(255,255,255,.25),inset 0 1px 0 rgba(0,0,0,.25);"></div>
<svg style="position:absolute;left:28px;top:78px;filter:drop-shadow(0 1px 0.6px rgba(0,0,0,.35));" width="32" height="30" viewBox="0 0 32 30"><path d="M1.2 14.6L16 3 30.8 14.6" fill="none" stroke="url(#ig)" stroke-width="3.2" stroke-linecap="round" stroke-linejoin="miter"/><path d="M6.3 16.2L16 8.6 25.7 16.2V26H19.6V16.6H13V26H6.3Z" fill="url(#ig)"/><rect x="3" y="25.6" width="26.4" height="3.4" rx="1.2" fill="url(#ig)"/></svg>
<div class="t" style="left:0px;top:118px;font-size:12.1px;line-height:16px;color:#e4ecea;width:88px;text-align:center;text-shadow:0 1px 0 rgba(0,0,0,.25);">Рабочий</div>
<div class="t" style="left:0px;top:132px;font-size:12.1px;line-height:16px;color:#e4ecea;width:88px;text-align:center;text-shadow:0 1px 0 rgba(0,0,0,.25);">стол</div>
<svg style="position:absolute;left:29px;top:178.5px;filter:drop-shadow(0 1px 0.6px rgba(0,0,0,.35));" width="30" height="37" viewBox="0 0 30 37"><rect x="2.2" y="2.4" width="25.4" height="32" rx="3.2" fill="none" stroke="url(#ig)" stroke-width="3.6"/><path d="M7.6 10.4h15M7.6 15h15M7.6 19.5h15M7.6 24h10.6" stroke="url(#ig)" stroke-width="2.3"/></svg>
<div class="t" style="left:0px;top:221px;font-size:12.1px;line-height:16px;color:#e4ecea;width:88px;text-align:center;text-shadow:0 1px 0 rgba(0,0,0,.25);">Контент</div>
<svg style="position:absolute;left:28.5px;top:272.5px;filter:drop-shadow(0 1px 0.6px rgba(0,0,0,.35));" width="32" height="32" viewBox="0 0 32 32"><path d="M2.4 0.6h26.4a2 2 0 0 1 2 2v26.4a2 2 0 0 1-2 2h-26.4a2 2 0 0 1-2-2v-26.4a2 2 0 0 1 2-2zM3.4 8v20.2h24.4v-20.2zM22.4 2.6v2.6h2.4v-2.6zM26.2 2.6v2.6h2.4v-2.6z" fill="url(#ig)" fill-rule="evenodd"/><text x="15.6" y="24.6" text-anchor="middle" font-family="Liberation Sans,Arial,sans-serif" font-weight="bold" font-size="17.5" fill="url(#ig)" textLength="21" lengthAdjust="spacingAndGlyphs">24</text></svg>
<div class="t" style="left:0px;top:312px;font-size:12.1px;line-height:16px;color:#e4ecea;width:88px;text-align:center;text-shadow:0 1px 0 rgba(0,0,0,.25);">Сайты</div>
<svg style="position:absolute;left:28px;top:366px;filter:drop-shadow(0 1px 0.6px rgba(0,0,0,.35));" width="34" height="34" viewBox="0 0 34 34"><g fill="none" stroke="url(#ig)"><path d="M27.2 9.2A13.4 13.4 0 1 1 22.5 5" stroke-width="5.6"/><path d="M22.3 13.8A6.6 6.6 0 1 1 19 11.3" stroke-width="3.2"/></g><circle cx="16.4" cy="18" r="2.6" fill="url(#ig)"/><path d="M16.6 17.8L27 7.4" stroke="url(#ig)" stroke-width="2.6"/><path d="M24 4.2l1.7 4.1 4.4 1.6 3.2-4.7-3.4-.4-.3-3.4z" fill="url(#ig)"/></svg>
<div class="t" style="left:0px;top:407px;font-size:12.1px;line-height:16px;color:#e4ecea;width:88px;text-align:center;text-shadow:0 1px 0 rgba(0,0,0,.25);">Маркетинг</div>
<svg style="position:absolute;left:25.5px;top:463px;filter:drop-shadow(0 1px 0.6px rgba(0,0,0,.35));" width="37" height="34" viewBox="0 0 37 34"><path d="M18 13.5L27 2.6" stroke="url(#ig)" stroke-width="3.4" stroke-linecap="round"/><rect x="0.6" y="10.2" width="35.8" height="5.2" rx="2.4" fill="url(#ig)"/><path d="M3.4 17.2h30.2l-3.2 13.4a2.6 2.6 0 0 1-2.5 2h-18.8a2.6 2.6 0 0 1-2.5-2zM8.6 19.4l1.2 8.8h2.4l-.8-8.8zM14.2 19.4l.4 8.8h2.4v-8.8zM20 19.4v8.8h2.4l.4-8.8zM25.6 19.4l-.8 8.8h2.4l1.2-8.8z" fill="url(#ig)" fill-rule="evenodd"/></svg>
<div class="t" style="left:0px;top:502px;font-size:12.1px;line-height:16px;color:#e4ecea;width:88px;text-align:center;text-shadow:0 1px 0 rgba(0,0,0,.25);">Магазин</div>
<svg style="position:absolute;left:27.5px;top:558.5px;filter:drop-shadow(0 1px 0.6px rgba(0,0,0,.35));" width="33" height="33" viewBox="0 0 33 33"><circle cx="16.5" cy="16.5" r="16.2" fill="url(#ig)"/><path d="M8.6 22.6a4.4 4.4 0 0 1-.6-8.7 5.2 5.2 0 0 1 6.6-4.2 6.6 6.6 0 0 1 11.4 2.6 5.3 5.3 0 0 1-1 10.3z" fill="#1e6f62"/><text x="16.8" y="21.4" text-anchor="middle" font-family="Liberation Sans,Arial,sans-serif" font-weight="bold" font-size="12.4" fill="#e8ebeb" textLength="14.6" lengthAdjust="spacingAndGlyphs">24</text></svg>
<div class="t" style="left:0px;top:599px;font-size:12.1px;line-height:16px;color:#e4ecea;width:88px;text-align:center;text-shadow:0 1px 0 rgba(0,0,0,.25);">Клиенты</div>
<svg style="position:absolute;left:28px;top:655.5px;filter:drop-shadow(0 1px 0.6px rgba(0,0,0,.35));" width="32" height="32" viewBox="0 0 32 32"><circle cx="16" cy="16" r="13.7" fill="none" stroke="url(#ig)" stroke-width="3.7"/><path d="M7.4 14.2h9.4l-3-3.6 2.6-2.2 6.8 7.6-6.8 7.6-2.6-2.2 3-3.6h-9.4z" fill="url(#ig)"/></svg>
<div class="t" style="left:0px;top:693px;font-size:12.1px;line-height:16px;color:#e4ecea;width:88px;text-align:center;text-shadow:0 1px 0 rgba(0,0,0,.25);">BXmaker</div>
<svg style="position:absolute;left:28px;top:751px;filter:drop-shadow(0 1px 0.6px rgba(0,0,0,.35));" width="32" height="32" viewBox="0 0 32 32"><circle cx="16" cy="16" r="13.7" fill="none" stroke="url(#ig)" stroke-width="3.7"/><path d="M7.4 14.2h9.4l-3-3.6 2.6-2.2 6.8 7.6-6.8 7.6-2.6-2.2 3-3.6h-9.4z" fill="url(#ig)"/></svg>
<div class="t" style="left:0px;top:789px;font-size:12.1px;line-height:16px;color:#e4ecea;width:88px;text-align:center;text-shadow:0 1px 0 rgba(0,0,0,.25);">VK</div>
<svg style="position:absolute;left:27.5px;top:849.5px;filter:drop-shadow(0 1px 0.6px rgba(0,0,0,.35));" width="36" height="33" viewBox="0 0 36 33"><path d="M17.6 0.6L34.8 9.4 17.6 18.2 0.6 9.4Z" fill="url(#ig)"/><path d="M4.6 13.6L17.6 20.4 30.8 13.6 34.8 15.8 17.6 24.8 0.6 15.8Z" fill="url(#ig)" opacity=".92"/><path d="M4.6 20.2L17.6 27 30.8 20.2 34.8 22.4 17.6 31.4 0.6 22.4Z" fill="url(#ig)" opacity=".85"/></svg>
<div class="t" style="left:0px;top:887px;font-size:12.1px;line-height:16px;color:#e4ecea;width:88px;text-align:center;text-shadow:0 1px 0 rgba(0,0,0,.25);">Сервисы</div>
<svg style="position:absolute;left:26px;top:942.5px;filter:drop-shadow(0 1px 0.6px rgba(0,0,0,.35));" width="36" height="34" viewBox="0 0 36 34"><path d="M3.4 16.6a1.4 1.4 0 0 1 1.4-1.4h4.8a1.4 1.4 0 0 1 1.4 1.4v12h3v-26.6a1.4 1.4 0 0 1 1.4-1.4h5.6a1.4 1.4 0 0 1 1.4 1.4v26.6h3v-17.6a1.4 1.4 0 0 1 1.4-1.4h5.2a1.4 1.4 0 0 1 1.4 1.4v17.6h1.2a1.4 1.4 0 0 1 1.4 1.4v1.8a1.4 1.4 0 0 1-1.4 1.4h-32.2a1.4 1.4 0 0 1-1.4-1.4v-1.8a1.4 1.4 0 0 1 1.4-1.4h1z" fill="url(#ig)"/></svg>
<div class="t" style="left:0px;top:982px;font-size:12.1px;line-height:16px;color:#e4ecea;width:88px;text-align:center;text-shadow:0 1px 0 rgba(0,0,0,.25);">Аналитика</div>
<svg style="position:absolute;left:25.5px;top:1040.5px;filter:drop-shadow(0 1px 0.6px rgba(0,0,0,.35));" width="37" height="26" viewBox="0 0 37 26"><path d="M8 24.6a7.4 7.4 0 0 1-1.4-14.6 8.4 8.4 0 0 1 10.2-7.4 10 10 0 0 1 13.4 4.4 8.9 8.9 0 0 1-1.6 17.6z" fill="url(#ig)"/><path d="M16.6 9.4h4.2v6.2h3.6l-5.7 6-5.7-6h3.6z" fill="#1e6f62"/></svg>
<div class="t" style="left:0px;top:1073px;font-size:12.1px;line-height:16px;color:#e4ecea;width:88px;text-align:center;text-shadow:0 1px 0 rgba(0,0,0,.25);">Marketplace</div>
<svg style="position:absolute;left:28px;top:1128px;filter:drop-shadow(0 1px 0.6px rgba(0,0,0,.3));" width="36" height="38" viewBox="0 0 36 38"><path d="M13.6 6.6H3.4a1.6 1.6 0 0 0-1.6 1.6v25.2a1.6 1.6 0 0 0 1.6 1.6h25.4a1.6 1.6 0 0 0 1.6-1.6V23.6" fill="none" stroke="#2fb5ea" stroke-width="3.4"/><path d="M8.6 25.4l11.2-11 3 3-11.2 11z" fill="#f2f2f0"/><path d="M17.4 16.8l2.4-2.4 3 3-2.4 2.4z" fill="#c9c9c4"/><path d="M26.4 1.4l2.6 5.5 6 .7-4.4 4.2 1.1 6-5.3-3-5.3 3 1.1-6-4.4-4.2 6-.7z" fill="#ffdf2e"/></svg>
<div class="t" style="left:0px;top:1173px;font-size:12.1px;line-height:16px;color:#e4ecea;width:88px;text-align:center;text-shadow:0 1px 0 rgba(0,0,0,.25);">Переход в</div>
<div class="t" style="left:0px;top:1187px;font-size:12.1px;line-height:16px;color:#e4ecea;width:88px;text-align:center;text-shadow:0 1px 0 rgba(0,0,0,.25);">Битрикс24</div>
<svg style="position:absolute;left:27px;top:1231px;filter:drop-shadow(0 1px 0.6px rgba(0,0,0,.35));" width="32" height="32" viewBox="0 0 32 32"><path d="M13.26 0.64 L18.74 0.64 L18.93 5.19 L21.57 6.28 L24.92 3.20 L28.80 7.08 L25.72 10.43 L26.81 13.07 L31.36 13.26 L31.36 18.74 L26.81 18.93 L25.72 21.57 L28.80 24.92 L24.92 28.80 L21.57 25.72 L18.93 26.81 L18.74 31.36 L13.26 31.36 L13.07 26.81 L10.43 25.72 L7.08 28.80 L3.20 24.92 L6.28 21.57 L5.19 18.93 L0.64 18.74 L0.64 13.26 L5.19 13.07 L6.28 10.43 L3.20 7.08 L7.08 3.20 L10.43 6.28 L13.07 5.19Z M16 9.2a6.8 6.8 0 1 0 .01 0z" fill="url(#ig)" fill-rule="evenodd"/><path d="M16 11.6a4.4 4.4 0 1 0 .01 0zM16 13.6a2.4 2.4 0 1 1-.01 0z" fill="url(#ig)" fill-rule="evenodd" opacity=".0"/><circle cx="16" cy="16" r="3.7" fill="url(#ig)"/><circle cx="16" cy="16" r="0" fill="#1e6f62"/></svg>
<div class="t" style="left:0px;top:1270px;font-size:12.1px;line-height:16px;color:#e4ecea;width:88px;text-align:center;text-shadow:0 1px 0 rgba(0,0,0,.25);">Настройки</div>
<div style="position:absolute;left:0px;top:0px;width:1528px;height:53px;background:linear-gradient(#1e6a5d 0,#1e6a5d 84%,#1b6155 92%,#195a4f 100%);"></div>
<div style="position:absolute;left:0px;top:53px;width:1528px;height:6px;background:#e2e8ea;"></div>
<div style="position:absolute;left:0px;top:59px;width:1528px;height:1px;background:#a2a9ac;"></div>
<div style="position:absolute;left:0px;top:60px;width:1528px;height:1px;background:#d3dadc;"></div>
<div style="position:absolute;left:14px;top:9px;width:89px;height:45px;box-sizing:border-box;border:1px solid #0f1219;border-bottom:0;border-radius:5px 5px 0 0;background:linear-gradient(#22273b,#181b28);height:43px;"></div>
<div class="t" style="left:14px;top:19px;font-size:18.7px;line-height:23px;color:#d7dbdf;font-weight:bold;width:89px;text-align:center;">Сайт</div>
<div style="position:absolute;left:115px;top:9px;width:227px;height:50px;border-radius:5px 5px 0 0;background:linear-gradient(#fcfdfd,#f0f3f4 40%,#e2e8ea 100%);"></div>
<div class="t" style="left:132.3px;top:19px;font-size:18.7px;line-height:23px;color:#4c5460;font-weight:bold;">Администрирование</div>
<div style="position:absolute;left:372px;top:9px;width:58px;height:36px;box-sizing:border-box;border:1px solid #1d212c;border-radius:5px;background:linear-gradient(#4b5266,#393e4f);box-shadow:0 1px 2px rgba(0,0,0,.35);"></div>
<svg style="position:absolute;left:384px;top:19px;" width="17" height="17" viewBox="0 0 17 17"><path d="M0.5 1h15.5v12.3h-5.6l-2.2 2.5-2.2-2.5h-5.5z" fill="#dfe2e4"/><path d="M7 3.3h2.6v2.3h-2.6zM6.2 6.8h3.4v4.4h1v1.1h-4.6v-1.1h1.1v-3.3h-0.9z" fill="#4a4f5e"/></svg>
<div class="t" style="left:409.3px;top:18px;font-size:13.2px;line-height:17px;color:#fff;font-weight:bold;">5</div>
<svg style="position:absolute;left:447px;top:19.3px;" width="15.6" height="15" viewBox="0 0 15.6 15"><path d="M6.31 -0.17 L9.09 -0.17 L9.22 1.91 L10.43 2.41 L12.00 1.03 L13.97 3.00 L12.59 4.57 L13.09 5.78 L15.17 5.91 L15.17 8.69 L13.09 8.82 L12.59 10.03 L13.97 11.60 L12.00 13.57 L10.43 12.19 L9.22 12.69 L9.09 14.77 L6.31 14.77 L6.18 12.69 L4.97 12.19 L3.40 13.57 L1.43 11.60 L2.81 10.03 L2.31 8.82 L0.23 8.69 L0.23 5.91 L2.31 5.78 L2.81 4.57 L1.43 3.00 L3.40 1.03 L4.97 2.41 L6.18 1.91Z M7.7 4.5a2.8 2.8 0 1 0 .01 0z" fill="#d9dddc" fill-rule="evenodd"/></svg>
<div class="t" style="left:474.5px;top:18px;font-size:13.2px;line-height:17px;color:#e7eceb;">Настройки</div>
<div style="position:absolute;left:812px;top:11px;width:227px;height:30px;box-sizing:border-box;border:1px solid #171a23;border-radius:3px;background:#2d313e;"></div>
<div class="t" style="left:818.5px;top:17px;font-size:14.3px;line-height:18px;color:#f1f1f1;">поиск...</div>
<svg style="position:absolute;left:1015px;top:20px;" width="17" height="14" viewBox="0 0 17 14"><circle cx="6.3" cy="6" r="4.4" fill="none" stroke="#a7a9ae" stroke-width="2.3"/><path d="M9.6 9.2l4.6 3.6" stroke="#a7a9ae" stroke-width="2.6" stroke-linecap="round"/></svg>
<div style="position:absolute;left:1058px;top:10px;width:162px;height:32px;border-radius:5px 2px 2px 5px;background:#12151d;"></div>
<div style="position:absolute;left:1059px;top:11px;width:161px;height:30px;border-radius:4px 0 0 4px;background:#1d2130;overflow:hidden;"><i style="position:absolute;left:18.0px;top:0;width:10.5px;height:15px;background:#2c3141"></i><i style="position:absolute;left:18.0px;top:15px;width:10.5px;height:17px;background:#393e4c"></i><i style="position:absolute;left:28.3px;top:0;width:10.5px;height:15px;background:#272c3c"></i><i style="position:absolute;left:28.3px;top:15px;width:10.5px;height:17px;background:#272c3c"></i><i style="position:absolute;left:38.6px;top:0;width:10.5px;height:15px;background:#2f3443"></i><i style="position:absolute;left:38.6px;top:15px;width:10.5px;height:17px;background:#363b49"></i><i style="position:absolute;left:48.9px;top:0;width:10.5px;height:15px;background:#2e3342"></i><i style="position:absolute;left:48.9px;top:15px;width:10.5px;height:17px;background:#3d424f"></i><i style="position:absolute;left:59.2px;top:0;width:10.5px;height:15px;background:#2f3443"></i><i style="position:absolute;left:59.2px;top:15px;width:10.5px;height:17px;background:#383d4b"></i><i style="position:absolute;left:69.5px;top:0;width:10.5px;height:15px;background:#3a3f4d"></i><i style="position:absolute;left:69.5px;top:15px;width:10.5px;height:17px;background:#3a3f4d"></i><i style="position:absolute;left:79.8px;top:0;width:10.5px;height:15px;background:#2d3241"></i><i style="position:absolute;left:79.8px;top:15px;width:10.5px;height:17px;background:#2d3241"></i><i style="position:absolute;left:90.1px;top:0;width:10.5px;height:15px;background:#2f3443"></i><i style="position:absolute;left:90.1px;top:15px;width:10.5px;height:17px;background:#363b49"></i><i style="position:absolute;left:100.4px;top:0;width:10.5px;height:15px;background:#2c3141"></i><i style="position:absolute;left:100.4px;top:15px;width:10.5px;height:17px;background:#363b49"></i><i style="position:absolute;left:110.7px;top:0;width:10.5px;height:15px;background:#2e3342"></i><i style="position:absolute;left:110.7px;top:15px;width:10.5px;height:17px;background:#353a48"></i><i style="position:absolute;left:121.0px;top:0;width:10.5px;height:15px;background:#2f3443"></i><i style="position:absolute;left:121.0px;top:15px;width:10.5px;height:17px;background:#383d4c"></i><i style="position:absolute;left:131.3px;top:0;width:10.5px;height:15px;background:#2f3443"></i><i style="position:absolute;left:131.3px;top:15px;width:10.5px;height:17px;background:#40444f"></i><i style="position:absolute;left:141.6px;top:0;width:10.5px;height:15px;background:#1d2130"></i><i style="position:absolute;left:141.6px;top:15px;width:10.5px;height:17px;background:#1d2130"></i><i style="position:absolute;left:151.9px;top:0;width:10.5px;height:15px;background:#1b2f38"></i><i style="position:absolute;left:151.9px;top:15px;width:10.5px;height:17px;background:#1b2f38"></i></div>
<svg style="position:absolute;left:1069.5px;top:18.5px;" width="7" height="13" viewBox="0 0 7 13"><path d="M7 0.3c-2.2 0-3.6 1.6-3.6 3.8 0 1.6.6 2.7 1.5 3.5-1.6.7-4.3 1.6-4.6 4.9h6.7z" fill="#fff"/></svg>
<div class="t" style="left:1236.7px;top:18px;font-size:13.2px;line-height:17px;color:#bcc3c5;font-weight:bold;">Выйти</div>
<div class="t" style="left:1306.3px;top:18px;font-size:13.2px;line-height:17px;color:#b7bfc2;font-weight:bold;">RU</div>
<svg style="position:absolute;left:1329px;top:24px;" width="7" height="5" viewBox="0 0 7 5"><path d="M0 0h6.6l-3.3 4.4z" fill="#b7bfc2"/></svg>
<svg style="position:absolute;left:1361px;top:17.6px;" width="19" height="18" viewBox="0 0 19 18"><rect x="1.2" y="1.2" width="16.2" height="14.6" fill="none" stroke="#c9cece" stroke-width="2.3"/><path d="M2 3.4h15" stroke="#c9cece" stroke-width="2.2"/><path d="M4.4 7.4h10M4.4 9.8h10" stroke="#c9cece" stroke-width="1.4" stroke-dasharray="1.5 .5"/><path d="M5.4 12.4h8" stroke="#c9cece" stroke-width="1.4"/><path d="M1 17.3h17.6" stroke="#185549" stroke-width="1.2"/></svg>
<svg style="position:absolute;left:1401.5px;top:18.5px;" width="17" height="17" viewBox="0 0 17 17"><g fill="#c3c8c9"><path d="M11.2 0.6l4.9 4.9-1.2 1.2-1-.5-3 3 .3 2.7-1.4 1.4-6.1-6.1 1.4-1.4 2.7.3 3-3-.5-1z"/><path d="M5.5 10.3l1.1 1.1-5.9 5.2-.4-.4z"/></g></svg>
<svg style="position:absolute;left:1441px;top:17.6px;" width="18" height="18" viewBox="0 0 18 18"><circle cx="8.9" cy="8.9" r="8.8" fill="#dfe2e3"/></svg>
<div class="t" style="left:1441px;top:18px;font-size:13.5px;line-height:17px;color:#3b3f4c;font-weight:bold;width:17.8px;text-align:center;">?</div>
<div class="t" style="left:1465.5px;top:18px;font-size:13.2px;line-height:17px;color:#c9cece;font-weight:bold;">Помощь</div>
</body></html>
